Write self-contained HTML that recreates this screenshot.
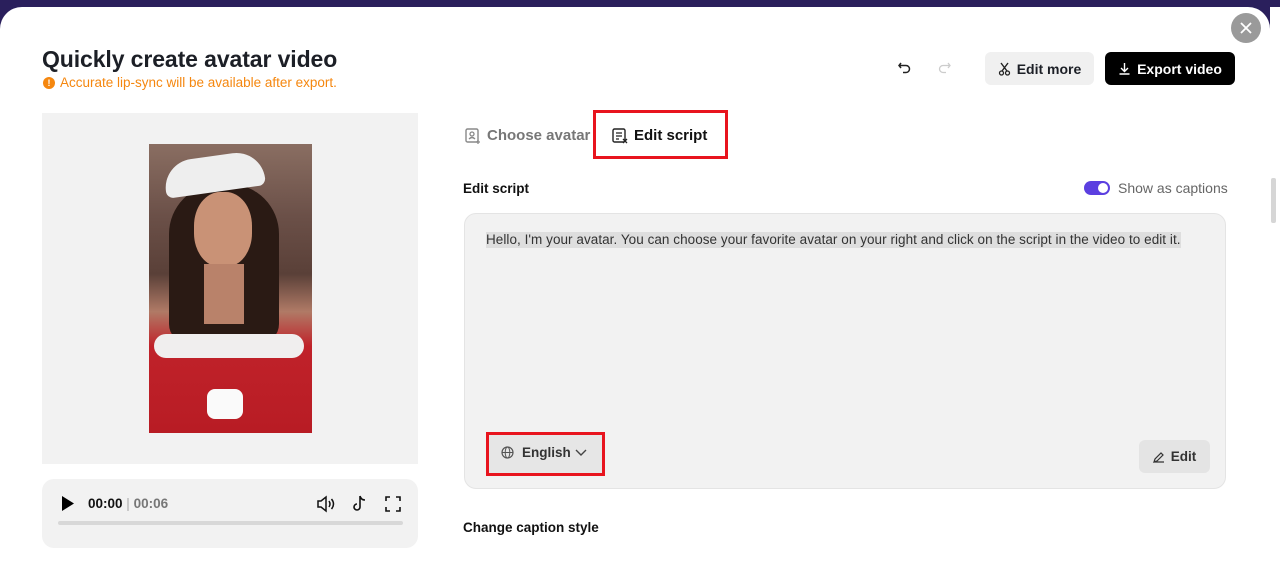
<!DOCTYPE html>
<html><head><meta charset="utf-8"><style>
*{box-sizing:border-box;margin:0;padding:0}
html,body{width:1280px;height:571px;overflow:hidden}
body{background:#fff;font-family:"Liberation Sans",Arial,sans-serif;position:relative}
.top{position:absolute;left:0;top:0;width:1280px;height:30px;background:#2a1f5c}
.modal{position:absolute;left:0;top:7px;width:1270px;height:564px;background:#fff;border-radius:22px 22px 0 0}
.abs{position:absolute}
h1{position:absolute;left:42px;top:39px;font-size:23px;font-weight:bold;color:#1c1f26;letter-spacing:-0.1px}
.warn{left:43px;top:68px;font-size:13.5px;color:#f5870f;display:flex;align-items:center;gap:5px}
.warn i{display:inline-block;width:12px;height:12px;border-radius:50%;background:#f5870f;color:#fff;font-size:9px;font-style:normal;font-weight:bold;text-align:center;line-height:12px}
.btn{position:absolute;top:45px;height:33px;border-radius:6px;font-size:14px;font-weight:bold;display:flex;align-items:center;justify-content:center;gap:6px}
.close{left:1231px;top:6px;width:30px;height:30px;border-radius:50%;background:#9a9a9a}
.tab{font-size:15px;font-weight:bold;display:flex;align-items:center;gap:6px}
.redbox{border:3px solid #e8141e}
</style></head><body>
<div class="top"></div>
<div class="abs" style="left:1270px;top:7px;width:10px;height:564px;background:#fff"></div>
<div class="modal">
<h1>Quickly create avatar video</h1>
<div class="abs warn"><i>!</i>Accurate lip-sync will be available after export.</div>
<div class="abs close"><svg width="30" height="30"><path d="M10 10L20 20M20 10L10 20" stroke="#fff" stroke-width="1.8"/></svg></div>
<svg class="abs" style="left:897px;top:53px" width="16" height="16" viewBox="0 0 16 16"><path d="M4 3L2 5.5 4 8M2 5.5h7a3.5 3.5 0 010 7H6" fill="none" stroke="#222" stroke-width="1.5"/></svg>
<svg class="abs" style="left:936px;top:53px" width="16" height="16" viewBox="0 0 16 16"><path d="M12 3l2 2.5-2 2.5M14 5.5H7a3.5 3.5 0 000 7h3" fill="none" stroke="#ccc" stroke-width="1.3"/></svg>
<div class="btn" style="left:985px;width:109px;background:#f0f0f0;color:#1c1f26"><svg width="13" height="14" viewBox="0 0 13 14"><path d="M3 1l6 8M10 1L4 9" stroke="#222" stroke-width="1.4"/><circle cx="3.5" cy="11" r="2" fill="none" stroke="#222" stroke-width="1.3"/><circle cx="9.5" cy="11" r="2" fill="none" stroke="#222" stroke-width="1.3"/></svg>Edit more</div>
<div class="btn" style="left:1105px;width:130px;background:#000;color:#fff"><svg width="13" height="13" viewBox="0 0 13 13"><path d="M6.5 1v8M3 6l3.5 3.5L10 6M1.5 12h10" fill="none" stroke="#fff" stroke-width="1.4"/></svg>Export video</div>

<div class="abs" style="left:42px;top:106px;width:376px;height:351px;background:#f2f2f2"></div>
<div class="abs" style="left:149px;top:137px;width:163px;height:289px;overflow:hidden;background:linear-gradient(180deg,#8a6e62 0%,#6b5048 25%,#5a4038 45%,#b07a66 58%,#c0222a 70%,#b81c24 100%)">
<div class="abs" style="left:20px;top:40px;width:110px;height:160px;background:#2a1a14;border-radius:50px 50px 20px 20px"></div>
<div class="abs" style="left:15px;top:12px;width:100px;height:36px;background:#eee;border-radius:40px 40px 10px 10px;transform:rotate(-8deg)"></div>
<div class="abs" style="left:45px;top:48px;width:58px;height:75px;background:#c99276;border-radius:45%"></div>
<div class="abs" style="left:55px;top:120px;width:40px;height:60px;background:#b9826a"></div>
<div class="abs" style="left:5px;top:190px;width:150px;height:24px;background:#f0eeee;border-radius:12px"></div>
<div class="abs" style="left:58px;top:245px;width:36px;height:30px;background:#fafafa;border-radius:8px"></div>
</div>
<div class="abs" style="left:42px;top:472px;width:376px;height:69px;background:#f2f2f2;border-radius:12px"></div>
<svg class="abs" style="left:61px;top:489px" width="14" height="15"><path d="M1 0L13 7.5 1 15z" fill="#000"/></svg>
<div class="abs" style="left:88px;top:489px;font-size:13.5px;font-weight:bold;color:#111">00:00 <span style="color:#aaa;font-weight:normal">|</span> <span style="color:#777">00:06</span></div>
<svg class="abs" style="left:316px;top:488px" width="20" height="18" viewBox="0 0 20 18"><path d="M2 6h3l5-4v14l-5-4H2z" fill="none" stroke="#111" stroke-width="1.5"/><path d="M13 6q2 3 0 6M15.5 4q4 5 0 10" fill="none" stroke="#111" stroke-width="1.5"/></svg>
<svg class="abs" style="left:351px;top:487px" width="18" height="19" viewBox="0 0 18 19"><path d="M9 2v11a3 3 0 11-3-3M9 2q1 4 5 4" fill="none" stroke="#111" stroke-width="1.6"/></svg>
<svg class="abs" style="left:385px;top:489px" width="16" height="16" viewBox="0 0 16 16"><path d="M1 5V1h4M11 1h4v4M15 11v4h-4M5 15H1v-4" fill="none" stroke="#111" stroke-width="1.6"/></svg>
<div class="abs" style="left:58px;top:514px;width:345px;height:4px;background:#d8d8d8;border-radius:2px"></div>

<div class="abs tab" style="left:465px;top:120px;color:#777"><svg width="16" height="16" viewBox="0 0 16 16"><rect x="1" y="1" width="12" height="13" rx="1.5" fill="none" stroke="#888" stroke-width="1.4"/><circle cx="7" cy="6" r="2" fill="none" stroke="#888" stroke-width="1.3"/><path d="M4 11q3-3 6 0M13 12v4M11 14h4" fill="none" stroke="#888" stroke-width="1.3"/></svg>Choose avatar</div>
<div class="abs redbox" style="left:593px;top:103px;width:135px;height:49px"></div>
<div class="abs tab" style="left:612px;top:120px;color:#111"><svg width="16" height="16" viewBox="0 0 16 16"><rect x="1" y="1" width="12" height="13" rx="1.5" fill="none" stroke="#222" stroke-width="1.4"/><path d="M4 5h6M4 8h6M4 11h3M11 11l4 4M15 11l-4 4" stroke="#222" stroke-width="1.3"/></svg>Edit script</div>

<div class="abs" style="left:463px;top:174px;font-size:13.5px;font-weight:bold;color:#111">Edit script</div>
<div class="abs" style="left:1084px;top:174px;width:26px;height:14px;border-radius:7px;background:#5b3fe0"><div style="position:absolute;right:2px;top:2px;width:10px;height:10px;border-radius:50%;background:#fff"></div></div>
<div class="abs" style="left:1118px;top:173px;font-size:14px;color:#666">Show as captions</div>

<div class="abs" style="left:464px;top:206px;width:762px;height:276px;background:#f2f2f2;border:1px solid #e4e4e4;border-radius:12px"></div>
<div class="abs" style="left:486px;top:225px;font-size:13.5px;color:#333;background:#dedede;line-height:16px;white-space:nowrap;letter-spacing:0.05px">Hello, I'm your avatar. You can choose your favorite avatar on your right and click on the script in the video to edit it.</div>
<div class="abs redbox" style="left:486px;top:425px;width:119px;height:44px;background:#e6e6e6"></div>
<svg class="abs" style="left:501px;top:439px" width="13" height="13" viewBox="0 0 13 13"><circle cx="6.5" cy="6.5" r="5.5" fill="none" stroke="#555" stroke-width="1.2"/><ellipse cx="6.5" cy="6.5" rx="2.3" ry="5.5" fill="none" stroke="#555" stroke-width="1"/><path d="M1 6.5h11" stroke="#555"/></svg>
<div class="abs" style="left:522px;top:438px;font-size:13.5px;font-weight:bold;color:#333">English</div>
<svg class="abs" style="left:575px;top:442px" width="12" height="8"><path d="M1 1l5 5 5-5" fill="none" stroke="#444" stroke-width="1.4"/></svg>
<div class="abs" style="left:1139px;top:433px;width:71px;height:33px;background:#e4e4e4;border-radius:6px;font-size:13.5px;font-weight:bold;color:#333;display:flex;align-items:center;justify-content:center;gap:6px"><svg width="12" height="12" viewBox="0 0 12 12"><path d="M1 11l1-3 6-6 2 2-6 6zM1 11h10" fill="none" stroke="#333" stroke-width="1.2"/></svg>Edit</div>
<div class="abs" style="left:463px;top:513px;font-size:13.5px;font-weight:bold;color:#111">Change caption style</div>
</div>
<div class="abs" style="left:1271px;top:178px;width:5px;height:45px;background:#d6d6d6;border-radius:2px"></div>
</body></html>
